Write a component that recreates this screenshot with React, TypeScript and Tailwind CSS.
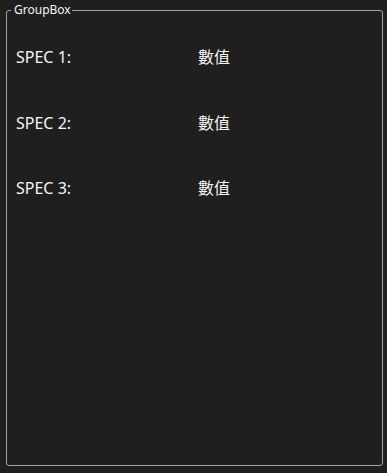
export default function App() {
  const specs = ["SPEC 1:", "SPEC 2:", "SPEC 3:"];

  return (
    <div
      className="w-[387px] h-[473px] bg-[#1f1f1f] pl-[6px] pt-[3px] text-[#f5f5f5]"
      style={{ fontFamily: '"Noto Sans", "Noto Sans CJK TC", sans-serif' }}
    >
      <fieldset className="w-[377px] h-[463px] border border-[#a3a3a3] rounded-[3px] m-0 p-0">
        <legend className="ml-[4px] pl-[3px] pr-[1px] text-[12px] leading-[14px]">
          GroupBox
        </legend>

        {/* spec rows */}
        <div className="flex flex-col gap-[45.5px] pl-[9px] pt-[30px]">
          {specs.map((spec) => (
            <div key={spec} className="grid grid-cols-[182px_1fr] text-[16px] leading-[20px]">
              <span>{spec}</span>
              <span>數值</span>
            </div>
          ))}
        </div>
      </fieldset>
    </div>
  );
}
